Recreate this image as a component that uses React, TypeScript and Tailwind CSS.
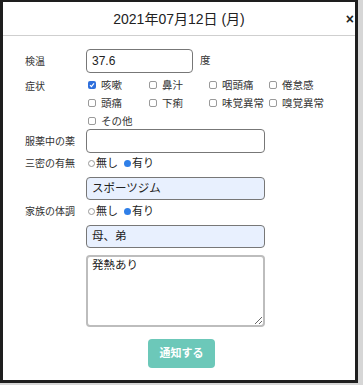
import React from "react";

const font = { fontFamily: '"Liberation Sans", "Noto Sans CJK JP", sans-serif' };

function Check({ label, checked = false }: { label: string; checked?: boolean }) {
  return (
    <div className="flex items-center h-[18px]">
      {checked ? (
        <span className="w-[8px] h-[8px] rounded-[2px] bg-[#2f6fdc] flex items-center justify-center">
          <svg width="6" height="6" viewBox="0 0 6 6">
            <path d="M1 3.2 L2.4 4.6 L5 1.4" stroke="white" strokeWidth="1.2" fill="none" />
          </svg>
        </span>
      ) : (
        <span className="w-[8px] h-[8px] rounded-[2px] border border-[#9a9a9a] bg-white" />
      )}
      <span className="ml-[5px] text-[10.5px] text-[#333] leading-none">{label}</span>
    </div>
  );
}

function Radios() {
  return (
    <div className="flex items-center h-[16px] text-[11px] text-[#222] leading-none">
      <span className="w-[7px] h-[7px] rounded-full border border-[#999] bg-white" />
      <span className="ml-[1px]">無し</span>
      <span className="ml-[6px] w-[7px] h-[7px] rounded-full bg-[#2f7fe8]" />
      <span className="ml-[1px]">有り</span>
    </div>
  );
}

export default function App() {
  return (
    <div className="w-[363px] h-[385px] bg-[#d6d6d6]" style={font}>
      <div className="w-[358px] h-[383px] bg-white border-[#1e1e1e] border-l-[3px] border-t-[2px] border-r-[3px] border-b-[3px] flex flex-col">
        <div className="relative h-[34px] border-b border-[#cfcfcf] flex items-center justify-center">
          <span className="text-[14px] text-[#222] mt-[2px]">2021年07月12日 (月)</span>
          <span className="absolute right-[1px] top-[7px] text-[14px] font-bold text-[#222]">×</span>
        </div>
        <div className="pl-[22px] flex flex-col">
          <div className="flex items-center mt-[13px] h-[24px]">
            <span className="w-[61px] text-[10px] text-[#333]">検温</span>
            <div className="w-[107px] h-[24px] border border-[#777] rounded-[4px] flex items-center pl-[5px] text-[12px] text-[#222]">
              37.6
            </div>
            <span className="ml-[7px] text-[10.5px] text-[#333]">度</span>
          </div>
          <div className="flex mt-[3px]">
            <span className="w-[61px] text-[10px] text-[#333] mt-[3px]">症状</span>
            <div className="grid grid-cols-[61px_60px_60px_60px] ml-[2px]">
              <Check label="咳嗽" checked />
              <Check label="鼻汁" />
              <Check label="咽頭痛" />
              <Check label="倦怠感" />
              <Check label="頭痛" />
              <Check label="下痢" />
              <Check label="味覚異常" />
              <Check label="嗅覚異常" />
              <Check label="その他" />
            </div>
          </div>
          <div className="flex items-center -mt-px h-[24px]">
            <span className="w-[61px] text-[10px] text-[#333]">服薬中の薬</span>
            <div className="w-[179px] h-[24px] border border-[#777] rounded-[4px]" />
          </div>
          <div className="flex items-center mt-[2px] h-[16px]">
            <span className="w-[61px] text-[10px] text-[#333]">三密の有無</span>
            <div className="ml-[2px]"><Radios /></div>
          </div>
          <div className="flex mt-[6px]">
            <div className="ml-[61px] w-[179px] h-[23px] border border-[#777] rounded-[4px] bg-[#e8f0fe] flex items-center pl-[5px] text-[11.5px] text-[#222]">
              スポーツジム
            </div>
          </div>
          <div className="flex items-center mt-[3px] h-[16px]">
            <span className="w-[61px] text-[10px] text-[#333]">家族の体調</span>
            <div className="ml-[2px]"><Radios /></div>
          </div>
          <div className="flex mt-[6px]">
            <div className="ml-[61px] w-[179px] h-[23px] border border-[#777] rounded-[4px] bg-[#e8f0fe] flex items-center pl-[5px] text-[11.5px] text-[#222]">
              母、弟
            </div>
          </div>
          <div className="flex mt-[7px]">
            <textarea
              readOnly
              defaultValue="発熱あり"
              className="ml-[61px] w-[179px] h-[72px] border-2 border-[#bdbdbd] rounded-[4px] px-[4px] pt-[1px] text-[11.5px] text-[#222] leading-[1.3] outline-none"
              style={font}
            />
          </div>
          <div className="flex mt-[12px] pl-[123px]">
            <div className="w-[67px] h-[29px] rounded-[4px] bg-[#6cc8b9] flex items-center justify-center text-white text-[11px] font-bold">
              通知する
            </div>
          </div>
        </div>
      </div>
    </div>
  );
}
